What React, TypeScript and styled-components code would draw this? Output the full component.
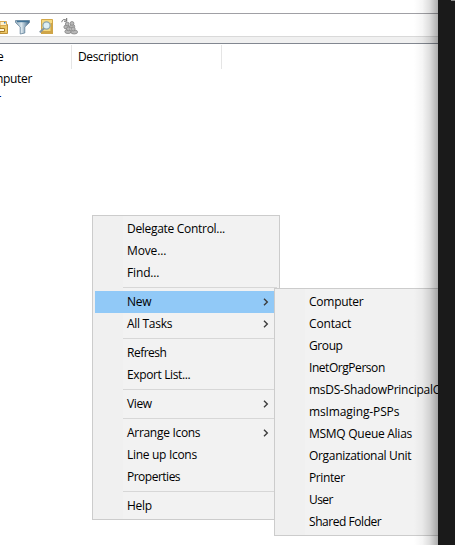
import React from 'react';
import styled, { createGlobalStyle } from 'styled-components';

const GlobalStyle = createGlobalStyle`
  *, *::before, *::after { box-sizing: border-box; }
  html, body { margin: 0; padding: 0; overflow: hidden; }
  body { font-family: "Open Sans", "Noto Sans", sans-serif; font-size: 12px; color: #000; }
`;

const Screen = styled.div`
  position: relative;
  display: flex;
  width: 455px;
  height: 545px;
  overflow: hidden;
  background: #1a1a1a;
`;

const Console = styled.main`
  position: relative;
  display: flex;
  flex-direction: column;
  width: 438px;
  height: 100%;
  overflow: hidden;
  background: #fff;
`;

const MenuStrip = styled.div`
  height: 14px;
  flex: none;
  border-bottom: 1px solid #a0a0a5;
`;

const Toolbar = styled.div`
  display: flex;
  align-items: flex-start;
  height: 23px;
  flex: none;
  border-bottom: 1px solid #d9d9d9;
`;

const ToolIcon = styled.svg<{ $gap?: number }>`
  flex: none;
  display: block;
  margin-top: 4px;
  margin-left: ${(p) => p.$gap ?? 0}px;
`;

const PaneEdge = styled.div`
  height: 7px;
  flex: none;
  background: #f0f0f0;
  border-bottom: 1px solid #828790;
`;

const ColumnHeader = styled.div`
  display: flex;
  height: 25px;
  flex: none;
  padding-top: 1px;
`;

const Column = styled.div<{ $width: number }>`
  width: ${(p) => p.$width}px;
  height: 24px;
  padding-left: 6px;
  line-height: 24px;
  letter-spacing: -0.35px;
  border-right: 1px solid #e5e5e5;
  overflow: hidden;
  white-space: nowrap;
`;

const Clipped = styled.span<{ $shift: number }>`
  display: block;
  margin-left: -${(p) => p.$shift}px;
`;

const ListRow = styled.div<{ $color?: string }>`
  height: 20px;
  line-height: 20px;
  letter-spacing: -0.3px;
  color: ${(p) => p.$color ?? '#000'};
  white-space: nowrap;
`;

const Label = styled.span<{ $spacing?: number }>`
  letter-spacing: ${(p) => p.$spacing ?? -0.3}px;
`;

const Menu = styled.div<{ $x: number; $y: number; $width: number }>`
  position: absolute;
  left: ${(p) => p.$x}px;
  top: ${(p) => p.$y}px;
  width: ${(p) => p.$width}px;
  padding: 2px;
  border: 1px solid #ccc;
  background: linear-gradient(to right, #f0f0f0 30px, #f2f2f2 30px);
`;

const MenuItem = styled.div<{ $active?: boolean }>`
  display: flex;
  align-items: center;
  justify-content: space-between;
  height: 22px;
  padding: 0 8px 0 32px;
  line-height: 22px;
  white-space: nowrap;
  background: ${(p) => (p.$active ? '#91c9f7' : 'transparent')};
`;

const Separator = styled.div`
  height: 1px;
  margin: 3px 0 3px 28px;
  background: #d7d7d7;
`;

const EdgeShadow = styled.div`
  position: absolute;
  right: 0;
  top: 0;
  width: 24px;
  height: 100%;
  background: linear-gradient(to right, rgba(0,0,0,0), rgba(0,0,0,.04) 35%, rgba(0,0,0,.13) 65%, rgba(0,0,0,.32));
`;

const CornerMark = styled.div`
  width: 4px;
  height: 1px;
  margin-left: 13px;
  background: #8a8a8a;
`;

const Chevron = () => (
  <svg width="6" height="8" viewBox="0 0 6 8">
    <path d="M1 .8 4.3 4 1 7.2" fill="none" stroke="#3c3c3c" strokeWidth="1.4" />
  </svg>
);

type Entry = { label: string; spacing?: number; sub?: boolean; active?: boolean };

const groups: Entry[][] = [
  [
    { label: 'Delegate Control...' },
    { label: 'Move...', spacing: -0.15 },
    { label: 'Find...', spacing: -0.15 },
  ],
  [
    { label: 'New', sub: true, active: true },
    { label: 'All Tasks', spacing: -0.3, sub: true },
  ],
  [
    { label: 'Refresh', spacing: -0.5 },
    { label: 'Export List...', spacing: -0.38 },
  ],
  [{ label: 'View', spacing: -0.4, sub: true }],
  [
    { label: 'Arrange Icons', sub: true },
    { label: 'Line up Icons' },
    { label: 'Properties', spacing: -0.5 },
  ],
  [{ label: 'Help', spacing: -0.3 }],
];

const newObjects: Entry[] = [
  { label: 'Computer', spacing: -0.25 },
  { label: 'Contact', spacing: -0.15 },
  { label: 'Group', spacing: -0.4 },
  { label: 'InetOrgPerson', spacing: -0.45 },
  { label: 'msDS-ShadowPrincipalContainer', spacing: -0.25 },
  { label: 'msImaging-PSPs', spacing: -0.12 },
  { label: 'MSMQ Queue Alias', spacing: -0.27 },
  { label: 'Organizational Unit', spacing: -0.32 },
  { label: 'Printer', spacing: -0.4 },
  { label: 'User', spacing: -0.6 },
  { label: 'Shared Folder', spacing: -0.45 },
];

const Item = ({ label, spacing, sub, active }: Entry) => (
  <MenuItem $active={active}>
    <Label $spacing={spacing}>{label}</Label>
    {sub && <Chevron />}
  </MenuItem>
);

const FolderIcon = () => (
  <ToolIcon width="8" height="17" viewBox="0 0 8 17">
    <path d="M0 6.5h7.5v9H0z" fill="#ecc766" stroke="#c0933a" />
    <path d="M0 3.5h6.5v4H0z" fill="#fff1cb" stroke="#d8a850" />
    <path d="M0 10.5h4.5v3H0" fill="#fff7dc" stroke="#a87c24" />
    <path d="M4 4h1.5v1.5H4z" fill="#3d85c6" />
  </ToolIcon>
);

const FilterIcon = () => (
  <ToolIcon $gap={7} width="16" height="17" viewBox="0 0 16 17">
    <defs>
      <linearGradient id="steel">
        <stop offset="0" stopColor="#8fa9ba" />
        <stop offset=".42" stopColor="#dce8ee" />
        <stop offset="1" stopColor="#3a6284" />
      </linearGradient>
    </defs>
    <path d="M.5 2.5h14v2L9.8 9v6L5.2 16V9L.5 4.5z" fill="url(#steel)" stroke="#64839a" strokeWidth=".8" />
    <path d="M2 3.5h11.5" stroke="#3f7296" strokeWidth="1.4" />
  </ToolIcon>
);

const FindIcon = () => (
  <ToolIcon $gap={8} width="15" height="17" viewBox="0 0 15 17">
    <path d="M2.5 1.5h11v14h-11z" fill="#f5d980" stroke="#d3a848" />
    <path d="M11.5 5H14v11H2v-3h9.5z" fill="#cfa548" />
    <circle cx="7.5" cy="7.5" r="3.6" fill="#dceff6" stroke="#8aa4ae" strokeWidth="1.2" />
    <path d="M5 10.2.8 14.4" stroke="#8496a0" strokeWidth="2" />
  </ToolIcon>
);

const GroupIcon = () => (
  <ToolIcon $gap={7} width="18" height="17" viewBox="0 0 18 17">
    <path d="M.8 4.2C1 2 3 .7 5.2 2.2M5.7 0v3.2H3" fill="none" stroke="#666" />
    <g fill="#b8b8b8" stroke="#7c7c7c" strokeWidth=".7">
      <ellipse cx="5.6" cy="9" rx="2.8" ry="2" />
      <circle cx="6.2" cy="6" r="1.9" />
      <ellipse cx="11.2" cy="8.2" rx="2.6" ry="1.8" />
      <circle cx="11" cy="5.4" r="1.9" />
      <ellipse cx="7" cy="13.6" rx="3.2" ry="2" />
      <circle cx="7.4" cy="10.8" r="1.9" />
      <ellipse cx="13.2" cy="14" rx="3.4" ry="2" />
      <circle cx="12.2" cy="11" r="2" />
    </g>
  </ToolIcon>
);

export default function App() {
  return (
    <Screen>
      <GlobalStyle />
      <Console>
        <MenuStrip />
        <Toolbar>
          <FolderIcon />
          <FilterIcon />
          <FindIcon />
          <GroupIcon />
        </Toolbar>
        <PaneEdge />
        <ColumnHeader>
          <Column $width={72}><Clipped $shift={28}>Type</Clipped></Column>
          <Column $width={150}>Description</Column>
        </ColumnHeader>
        <ListRow><Clipped $shift={22}>Computer</Clipped></ListRow>
        <ListRow $color="#000060"><Clipped $shift={24}>User</Clipped></ListRow>
        <Menu $x={92} $y={215} $width={188}>
          {groups.map((group, i) => (
            <React.Fragment key={i}>
              {i > 0 && <Separator />}
              {group.map((entry) => <Item key={entry.label} {...entry} />)}
            </React.Fragment>
          ))}
        </Menu>
        <Menu $x={274} $y={288} $width={240}>
          {newObjects.map((entry) => <Item key={entry.label} {...entry} />)}
        </Menu>
        <EdgeShadow />
      </Console>
      <CornerMark />
    </Screen>
  );
}
